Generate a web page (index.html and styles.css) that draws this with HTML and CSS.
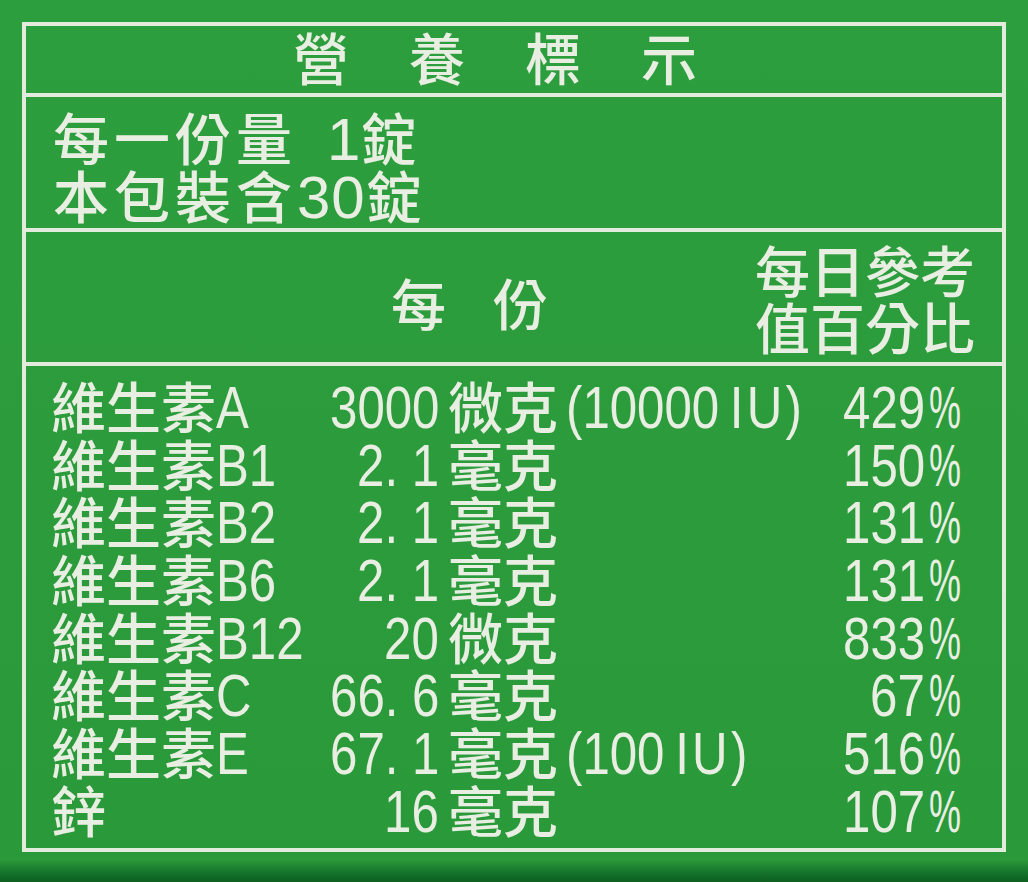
FILE: index.html
```html
<!DOCTYPE html>
<html lang="zh-Hant">
<head>
<meta charset="utf-8">
<title>營養標示</title>
<link rel="stylesheet" href="styles.css">
</head>
<body>
<div class="label">
  <div class="title">營養標示</div>
  <div class="serving">
    <div class="sline">每一份量<span class="n s1">1</span>錠</div>
    <div class="sline">本包裝含<span class="n s2">30</span>錠</div>
  </div>
  <div class="head">
    <div class="per">每份</div>
    <div class="dv">每日參考<br>值百分比</div>
  </div>
  <div class="data">
    <div class="row"><div class="nm">維生素<span class="n">A</span></div><div class="amt"><span class="n">3000</span></div><div class="unit">微克<span class="n ex">(10000<span class="iu">IU</span>)</span></div><div class="pct"><span class="n v">429</span><span class="n pc">%</span></div></div>
    <div class="row"><div class="nm">維生素<span class="n">B1</span></div><div class="amt"><span class="n">2. 1</span></div><div class="unit">毫克</div><div class="pct"><span class="n v">150</span><span class="n pc">%</span></div></div>
    <div class="row"><div class="nm">維生素<span class="n">B2</span></div><div class="amt"><span class="n">2. 1</span></div><div class="unit">毫克</div><div class="pct"><span class="n v">131</span><span class="n pc">%</span></div></div>
    <div class="row"><div class="nm">維生素<span class="n">B6</span></div><div class="amt"><span class="n">2. 1</span></div><div class="unit">毫克</div><div class="pct"><span class="n v">131</span><span class="n pc">%</span></div></div>
    <div class="row"><div class="nm">維生素<span class="n">B12</span></div><div class="amt"><span class="n">20</span></div><div class="unit">微克</div><div class="pct"><span class="n v">833</span><span class="n pc">%</span></div></div>
    <div class="row"><div class="nm">維生素<span class="n">C</span></div><div class="amt"><span class="n">66. 6</span></div><div class="unit">毫克</div><div class="pct"><span class="n v">67</span><span class="n pc">%</span></div></div>
    <div class="row"><div class="nm">維生素<span class="n">E</span></div><div class="amt"><span class="n">67. 1</span></div><div class="unit">毫克<span class="n ex">(100<span class="iu">IU</span>)</span></div><div class="pct"><span class="n v">516</span><span class="n pc">%</span></div></div>
    <div class="row"><div class="nm">鋅</div><div class="amt"><span class="n">16</span></div><div class="unit">毫克</div><div class="pct"><span class="n v">107</span><span class="n pc">%</span></div></div>
  </div>
</div>
</body>
</html>
```

FILE: styles.css
```css
* { box-sizing: border-box; }

html, body {
  margin: 0;
  padding: 0;
}

body {
  width: 1028px;
  height: 882px;
  overflow: hidden;
  background: linear-gradient(to bottom, #2d9e3d 0%, #2b9b3b 60%, #2a993a 97.5%, #14722b 99%, #0d5e1f 100%);
  color: #e8eee2;
  font-family: "Noto Sans CJK TC", sans-serif;
  font-weight: 500;
  font-size: 55px;
  padding: 22px 0 0 22px;
}

.n {
  font-family: "Liberation Sans", sans-serif;
  font-weight: 400;
  font-size: 60px;
}

.label {
  width: 984px;
  height: 830px;
  border: 4px solid #e3ebdd;
  display: flex;
  flex-direction: column;
}

.title {
  height: 71px;
  border-bottom: 4px solid #e3ebdd;
  font-size: 56px;
  line-height: 59px;
  letter-spacing: 60px;
  padding-left: 267px;
  white-space: nowrap;
}

.serving {
  height: 135px;
  border-bottom: 4px solid #e3ebdd;
  padding: 10px 0 0 27px;
  font-size: 56px;
  letter-spacing: 5px;
}

.sline {
  height: 58px;
  line-height: 58px;
  white-space: nowrap;
}

.s1 {
  margin-left: 30px;
  letter-spacing: 0;
}

.s2 {
  letter-spacing: 1px;
}

.head {
  height: 134px;
  border-bottom: 4px solid #e3ebdd;
  display: flex;
  align-items: flex-start;
  padding-left: 365px;
}

.per {
  margin-top: 41px;
  line-height: 57px;
  letter-spacing: 47px;
  white-space: nowrap;
}

.dv {
  margin-left: auto;
  margin-right: 27px;
  padding-top: 8px;
  line-height: 57px;
  white-space: nowrap;
}

.data {
  flex: 1;
  padding-top: 10px;
}

.row {
  display: grid;
  grid-template-columns: 240px 148px minmax(0, 1fr) auto;
  align-items: baseline;
  height: 57.7px;
  line-height: 57px;
  padding-left: 25px;
  padding-right: 42px;
  white-space: nowrap;
}

.nm .n {
  display: inline-block;
  transform: scaleX(0.82);
  transform-origin: left center;
}

.amt {
  text-align: right;
}

.amt .n {
  display: inline-block;
  transform: scaleX(0.82);
  transform-origin: right center;
}

.unit {
  padding-left: 9px;
}

.ex {
  display: inline-block;
  margin-left: 8px;
  transform: scaleX(0.82);
  transform-origin: left center;
}

.iu {
  margin-left: 13px;
  letter-spacing: 4px;
}

.pct {
  text-align: right;
}

.v {
  display: inline-block;
  transform: scaleX(0.82);
  transform-origin: right center;
}

.pc {
  display: inline-block;
  width: 31px;
  margin-left: 4px;
  transform: scaleX(0.6);
  transform-origin: left center;
  text-align: left;
}
```
